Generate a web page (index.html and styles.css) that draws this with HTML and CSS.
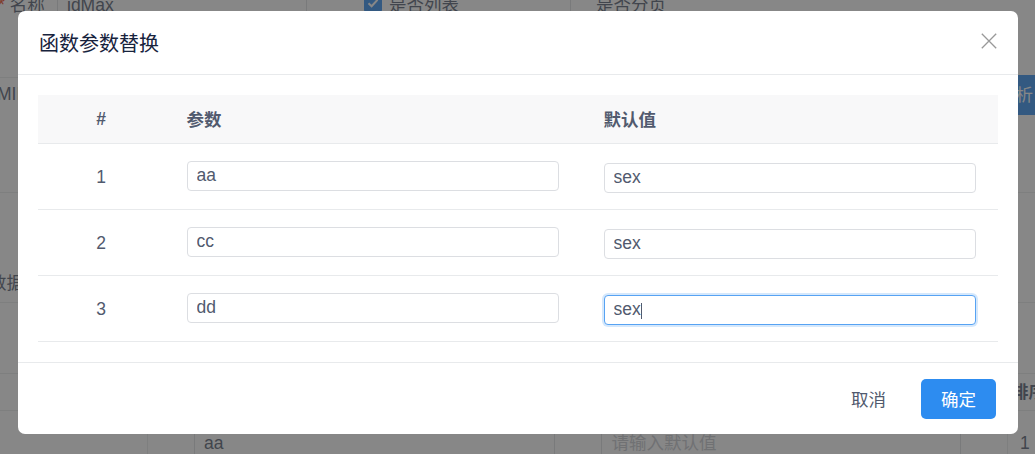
FILE: index.html
```html
<!DOCTYPE html>
<html lang="zh-CN">
<head>
<meta charset="utf-8">
<title>函数参数替换</title>
<link rel="stylesheet" href="styles.css">
</head>
<body>
<div class="page">
  <div class="bg">
    <div class="bg-row r1">
      <div class="cell c-label"><span class="req">*</span> 名称</div>
      <div class="cell c-value">idMax</div>
      <div class="cell c-check"><span class="checkbox"><svg viewBox="0 0 18 18" width="18" height="18"><path d="M4.5 9.2 L7.6 12.2 L13.5 5.8" fill="none" stroke="#fff" stroke-width="2"/></svg></span>是否列表</div>
      <div class="cell c-page">是否分页</div>
    </div>
    <div class="bg-row r2">
      <span class="cut-left">MII</span>
      <button class="bg-btn">解析</button>
    </div>
    <div class="bg-row r3">
      <span class="cut-left2">数据</span>
    </div>
    <div class="bg-row r4"></div>
    <div class="bg-row r5">
      <span class="sort-head">排序</span>
    </div>
    <div class="bg-row r6">
      <div class="cell6 c6a"></div>
      <div class="cell6 c6b">
        <span class="bg-input">aa</span>
        <span class="bg-input placeholder">请输入默认值</span>
      </div>
      <div class="cell6 c6c">1</div>
    </div>
  </div>

  <div class="mask"></div>

  <div class="modal">
    <div class="modal-header">
      <div class="modal-title">函数参数替换</div>
      <button class="modal-close" aria-label="关闭">
        <svg viewBox="0 0 16 16" width="16" height="16"><path d="M0.8 0.8 L15.2 15.2 M15.2 0.8 L0.8 15.2" stroke="#999" stroke-width="1.3" fill="none"/></svg>
      </button>
    </div>
    <div class="modal-body">
      <div class="ptable">
        <div class="prow phead">
          <div class="pc idx">#</div>
          <div class="pc">参数</div>
          <div class="pc">默认值</div>
        </div>
        <div class="prow">
          <div class="pc idx">1</div>
          <div class="pc"><input class="pin pin-name" value="aa"></div>
          <div class="pc"><input class="pin pin-def" value="sex"></div>
        </div>
        <div class="prow">
          <div class="pc idx">2</div>
          <div class="pc"><input class="pin pin-name" value="cc"></div>
          <div class="pc"><input class="pin pin-def" value="sex"></div>
        </div>
        <div class="prow">
          <div class="pc idx">3</div>
          <div class="pc"><input class="pin pin-name" value="dd"></div>
          <div class="pc"><span class="pin-wrap"><input class="pin pin-def pin-focus" value="sex"><span class="caret"></span></span></div>
        </div>
      </div>
    </div>
    <div class="modal-footer">
      <button class="btn btn-text">取消</button>
      <button class="btn btn-primary">确定</button>
    </div>
  </div>
</div>
</body>
</html>
```

FILE: styles.css
```css
html, body {
  margin: 0;
  padding: 0;
}
body {
  font-family: "Liberation Sans", "Noto Sans CJK SC", sans-serif;
  font-size: 17.5px;
  color: #515a6e;
  background: #fff;
}
.page {
  position: relative;
  width: 1035px;
  height: 454px;
  overflow: hidden;
}

/* ---------- background page ---------- */
.bg-row {
  box-sizing: border-box;
  border-bottom: 1px solid #e8eaec;
  display: flex;
  line-height: 22px;
}
.r1 {
  margin-top: -20px;
  height: 98px;
}
.r1 .cell {
  box-sizing: border-box;
  padding-top: 14px;
  white-space: nowrap;
}
.c-label {
  width: 60px;
  border-right: 1px solid #dcdee2;
  margin-left: -2px;
}
.req {
  color: #ed4014;
}
.c-value {
  width: 249px;
  padding-left: 9px;
  border-right: 1px solid #dcdee2;
}
.c-check {
  width: 264px;
  padding-left: 57px;
  border-right: 1px solid #dcdee2;
  display: flex;
  align-items: flex-start;
}
.checkbox {
  width: 18px;
  height: 18px;
  margin-top: 0;
  margin-right: 7px;
  background: #2d8cf0;
  border-radius: 2px;
  display: flex;
}
.c-page {
  padding-left: 25px;
}
.r2 {
  height: 115px;
  justify-content: space-between;
  align-items: flex-start;
}
.cut-left {
  margin-left: -3px;
  margin-top: 5px;
}
.bg-btn {
  margin-top: -3px;
  margin-right: -13px;
  height: 40px;
  padding: 0 15px;
  border: 0;
  border-radius: 4px;
  background: #2d8cf0;
  color: #fff;
  font: inherit;
}
.r3 {
  height: 110px;
  align-items: flex-end;
}
.cut-left2 {
  margin-left: -11px;
  padding-bottom: 8px;
  white-space: nowrap;
}
.r4 {
  height: 71px;
}
.r5 {
  height: 37px;
  align-items: center;
  justify-content: flex-end;
}
.sort-head {
  font-weight: bold;
  margin-right: -11px;
  white-space: nowrap;
}
.r6 {
  height: 60px;
  border-bottom: 0;
}
.cell6 {
  box-sizing: border-box;
}
.c6a {
  width: 148px;
  border-right: 1px solid #e8eaec;
}
.c6b {
  width: 860px;
  border-right: 1px solid #e8eaec;
  padding: 13px 46px 0;
  display: flex;
  gap: 46px;
}
.bg-input {
  box-sizing: border-box;
  width: 361px;
  height: 38px;
  border: 1px solid #dcdee2;
  border-radius: 4px;
  padding-left: 9px;
  line-height: 36px;
}
.bg-input.placeholder {
  color: #c5c8ce;
  padding-left: 10px;
}
.c6c {
  padding: 21px 0 0 12px;
}

/* ---------- mask & modal ---------- */
.mask {
  position: fixed;
  inset: 0;
  background: rgba(55, 55, 55, 0.6);
}
.modal {
  position: fixed;
  left: 18px;
  top: 11px;
  width: 1000px;
  background: #fff;
  border-radius: 7px;
}
.modal-header {
  padding: 19px 20px 19px;
  border-bottom: 1px solid #e8eaec;
}
.modal-title {
  font-family: "Noto Sans CJK SC", sans-serif;
  font-size: 20px;
  line-height: 25px;
  color: #17233d;
  margin-left: 1px;
}
.modal-close {
  position: absolute;
  top: 22px;
  right: 21px;
  width: 16px;
  height: 16px;
  padding: 0;
  border: 0;
  background: transparent;
  display: flex;
}
.modal-body {
  padding: 20px;
}
.prow {
  box-sizing: border-box;
  display: grid;
  grid-template-columns: 126px 1fr 1fr;
  align-items: center;
  height: 66px;
  border-bottom: 1px solid #e8eaec;
  line-height: 22px;
}
.phead {
  height: 49px;
  background: #f8f8f9;
  font-weight: bold;
  font-family: "Noto Sans CJK SC", "Liberation Sans", sans-serif;
}
.phead .idx {
  font-family: "Liberation Sans", sans-serif;
}
.pc {
  padding: 0 22.5px;
  display: flex;
}
.pc.idx {
  justify-content: center;
  padding: 0;
}
.pin {
  box-sizing: border-box;
  width: 100%;
  height: 30px;
  border: 1px solid #dcdee2;
  border-radius: 4px;
  padding: 0 9px;
  font: inherit;
  color: #515a6e;
  background: #fff;
  outline: none;
}
.pin-name {
  margin-bottom: 2px;
}
.pin-def {
  margin-top: 2px;
}
.pin-wrap {
  position: relative;
  display: flex;
  width: 100%;
}
.pin-focus {
  border-color: #57a3f3;
  box-shadow: 0 0 0 2px rgba(45, 140, 240, 0.2);
}
.caret {
  position: absolute;
  left: 37px;
  top: 10px;
  width: 1px;
  height: 16px;
  background: #515a6e;
}
.modal-footer {
  border-top: 1px solid #e8eaec;
  padding: 16px 22px 15px;
  display: flex;
  justify-content: flex-end;
  gap: 15px;
}
.btn {
  height: 40px;
  border: 0;
  border-radius: 5px;
  font-family: "Noto Sans CJK SC", sans-serif;
  font-size: 17.5px;
  line-height: 40px;
  padding: 0 20px;
}
.btn-text {
  background: transparent;
  color: #515a6e;
}
.btn-primary {
  width: 75px;
  padding: 0;
  background: #2d8cf0;
  color: #fff;
}
```
